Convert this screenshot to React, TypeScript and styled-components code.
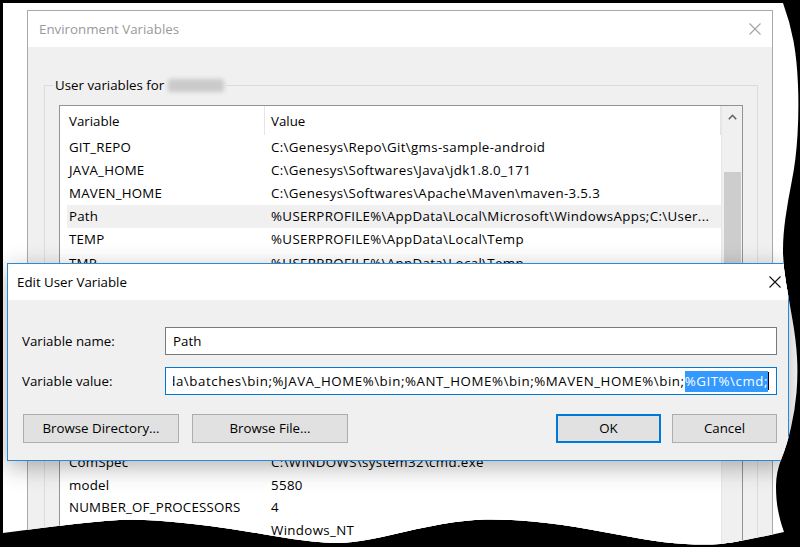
import React from "react";
import styled, { createGlobalStyle } from "styled-components";

type Pt = [number, number];

// torn paper outline: right edge then bottom edge, each smoothed on its own
const RIGHT_EDGE: Pt[] = [
  [783, 3], [790, 22], [797, 60], [799, 110], [796, 160], [788, 200], [783, 235],
  [783, 265], [789, 300], [796, 340], [798, 375], [795, 410], [787, 445], [776, 472],
  [776, 500], [780, 520], [784, 532],
];
const BOTTOM_EDGE: Pt[] = [
  [784, 532], [735, 543], [705, 545], [665, 543], [620, 535], [560, 524], [505, 519],
  [465, 520], [420, 528], [370, 540], [335, 544], [290, 539], [240, 530], [180, 522],
  [130, 519], [80, 523], [3, 533],
];

const smooth = (pts: Pt[]) => {
  let d = "";
  for (let i = 1; i < pts.length - 1; i++) {
    const [x, y] = pts[i];
    const [nx, ny] = pts[i + 1];
    d += ` Q${x} ${y} ${(x + nx) / 2} ${(y + ny) / 2}`;
  }
  const last = pts[pts.length - 1];
  return d + ` L${last[0]} ${last[1]}`;
};

const TORN_PATH = `M3 3 L783 3${smooth(RIGHT_EDGE)}${smooth(BOTTOM_EDGE)} L3 3 Z`;

const GlobalStyle = createGlobalStyle`
  html, body {
    margin: 0;
    padding: 0;
    background: #000;
  }
  body {
    font-family: "Open Sans", "Noto Sans", sans-serif;
    font-size: 13.3px;
    color: #000;
  }
  * {
    box-sizing: border-box;
  }
`;

const Paper = styled.div`
  position: relative;
  width: 800px;
  height: 547px;
  background: #fff;
  overflow: hidden;
  clip-path: path("${TORN_PATH}");
`;

const Window = styled.div<{ $active?: boolean }>`
  position: absolute;
  display: flex;
  flex-direction: column;
  background: #f0f0f0;
  border: 1px solid ${({ $active }) => ($active ? "#2a8ad9" : "#a9a9a9")};
`;

const EnvWindow = styled(Window)`
  left: 27px;
  top: 10px;
  width: 746px;
  height: 600px;
`;

const EditWindow = styled(Window)`
  left: 7px;
  top: 263px;
  width: 782px;
  height: 198px;
  box-shadow: 0 6px 22px rgba(0, 0, 0, 0.3);
`;

const TitleBar = styled.div<{ $inactive?: boolean; $padLeft: number; $closeRight: number }>`
  display: flex;
  align-items: center;
  justify-content: space-between;
  height: 36px;
  flex: none;
  padding: 0 ${({ $closeRight }) => $closeRight}px 0 ${({ $padLeft }) => $padLeft}px;
  background: #fff;
  color: ${({ $inactive }) => ($inactive ? "#9a9a9a" : "#000")};
  font-size: 13.3px;
`;

const CloseGlyph = styled.svg<{ $inactive?: boolean }>`
  width: 12px;
  height: 12px;
  stroke: ${({ $inactive }) => ($inactive ? "#a2a2a2" : "#111")};
  stroke-width: 1.1;
`;

const CloseIcon = ({ inactive }: { inactive?: boolean }) => (
  <CloseGlyph $inactive={inactive} viewBox="0 0 12 12">
    <path d="M0.5 0.5 L11.5 11.5 M11.5 0.5 L0.5 11.5" fill="none" />
  </CloseGlyph>
);

const EnvBody = styled.div`
  flex: 1;
  display: flex;
  flex-direction: column;
  padding: 29px 14px 0 16px;
`;

const GroupBox = styled.fieldset`
  margin: 0;
  min-width: 0;
  padding: 11px 14px 10px 14px;
  border: 1px solid #dcdcdc;
`;

const GroupLegend = styled.legend`
  display: flex;
  align-items: center;
  gap: 4px;
  margin-left: -6px;
  padding: 0 2px;
  line-height: 18px;
`;

const BlurredName = styled.span`
  display: inline-block;
  width: 56px;
  height: 13px;
  background: #cacaca;
  border-radius: 2px;
  filter: blur(2px);
`;

const ListView = styled.div<{ $height: number }>`
  display: flex;
  height: ${({ $height }) => $height}px;
  border: 1px solid #8f949c;
  background: #fff;
  overflow: hidden;
`;

const ListMain = styled.div`
  flex: 1;
  min-width: 0;
  display: flex;
  flex-direction: column;
`;

const ListHeader = styled.div`
  display: flex;
  height: 29px;
  flex: none;
`;

const HeaderCell = styled.div<{ $width?: number; $pad: number }>`
  display: flex;
  align-items: center;
  width: ${({ $width }) => ($width ? `${$width}px` : "auto")};
  flex: ${({ $width }) => ($width ? "none" : "1")};
  padding-left: ${({ $pad }) => $pad}px;
  border-right: 1px solid #e5e5e5;
`;

const Rows = styled.div`
  display: flex;
  flex-direction: column;
  padding-left: 7px;
`;

const Row = styled.div<{ $height: number; $selected?: boolean }>`
  display: flex;
  align-items: center;
  height: ${({ $height }) => $height}px;
  flex: none;
  white-space: nowrap;
  background: ${({ $selected }) => ($selected ? "#f0f0f0" : "transparent")};
`;

const Cell = styled.div<{ $width?: number; $spacing: number }>`
  width: ${({ $width }) => ($width ? `${$width}px` : "auto")};
  flex: ${({ $width }) => ($width ? "none" : "1")};
  padding-left: 2px;
  overflow: hidden;
  letter-spacing: ${({ $spacing }) => $spacing}px;
`;

const ScrollBar = styled.div`
  width: 21px;
  flex: none;
  display: flex;
  flex-direction: column;
  align-items: center;
  background: #f0f0f0;
  border-left: 1px solid #e6e6e6;
`;

const ScrollArrow = styled.div`
  height: 22px;
  flex: none;
  display: flex;
  align-items: center;
  justify-content: center;
  svg {
    width: 9px;
    height: 6px;
    stroke: #606060;
    stroke-width: 1.6;
    fill: none;
  }
`;

const ScrollThumb = styled.div<{ $offset: number; $size: number }>`
  width: 17px;
  margin-top: ${({ $offset }) => $offset}px;
  height: ${({ $size }) => $size}px;
  background: #cdcdcd;
`;

const ButtonRow = styled.div<{ $top: number }>`
  display: flex;
  align-items: center;
  gap: 11px;
  margin-top: ${({ $top }) => $top}px;
  height: 28px;
  flex: none;
`;

const BrowseGroup = styled.div`
  display: flex;
  gap: 13px;
  margin-left: 1px;
`;

const Spacer = styled.div`
  flex: 1;
`;

const Button = styled.button<{ $width: number; $primary?: boolean }>`
  width: ${({ $width }) => $width}px;
  height: 29px;
  padding: 0;
  font: inherit;
  color: #000;
  background: #e1e1e1;
  border: 1px solid ${({ $primary }) => ($primary ? "#0078d7" : "#adadad")};
  box-shadow: ${({ $primary }) => ($primary ? "inset 0 0 0 1px #0078d7" : "none")};
`;

const EditBody = styled.div`
  flex: 1;
  display: flex;
  flex-direction: column;
  padding: 27px 11px 0 14px;
`;

const FieldRow = styled.div`
  display: grid;
  grid-template-columns: 143px 1fr;
  align-items: center;
  height: 28px;
  & + & {
    margin-top: 12px;
  }
`;

const TextBox = styled.div<{ $focused?: boolean }>`
  display: flex;
  align-items: center;
  height: 28px;
  padding: 0 7px;
  background: #fff;
  border: 1px solid ${({ $focused }) => ($focused ? "#0078d7" : "#7a7a7a")};
  white-space: nowrap;
  overflow: hidden;
`;

const ScrolledText = styled.div`
  display: flex;
  justify-content: flex-end;
  align-items: center;
  width: 100%;
  overflow: hidden;
  letter-spacing: 0.55px;
`;

const Selection = styled.span`
  background: #3399ff;
  color: #fff;
  line-height: 21px;
`;

const Caret = styled.span`
  width: 1px;
  height: 18px;
  flex: none;
  background: #000;
`;

const ChevronUp = () => (
  <svg viewBox="0 0 9 6">
    <path d="M0.8 5.2 L4.5 1.3 L8.2 5.2" />
  </svg>
);

type EnvVar = { name: string; value: string };

const userVars: EnvVar[] = [
  { name: "GIT_REPO", value: "C:\\Genesys\\Repo\\Git\\gms-sample-android" },
  { name: "JAVA_HOME", value: "C:\\Genesys\\Softwares\\Java\\jdk1.8.0_171" },
  { name: "MAVEN_HOME", value: "C:\\Genesys\\Softwares\\Apache\\Maven\\maven-3.5.3" },
  { name: "Path", value: "%USERPROFILE%\\AppData\\Local\\Microsoft\\WindowsApps;C:\\User..." },
  { name: "TEMP", value: "%USERPROFILE%\\AppData\\Local\\Temp" },
  { name: "TMP", value: "%USERPROFILE%\\AppData\\Local\\Temp" },
];

const systemVars: EnvVar[] = [
  { name: "ANT_HOME", value: "C:\\Genesys\\Softwares\\Apache\\Ant" },
  { name: "asl.log", value: "Destination=file" },
  { name: "ComSpec", value: "C:\\WINDOWS\\system32\\cmd.exe" },
  { name: "model", value: "5580" },
  { name: "NUMBER_OF_PROCESSORS", value: "4" },
  { name: "OS", value: "Windows_NT" },
];

const VariableList = ({
  vars,
  height,
  rowHeight,
  selected,
  thumb,
}: {
  vars: EnvVar[];
  height: number;
  rowHeight: number;
  selected?: number;
  thumb?: { offset: number; size: number };
}) => (
  <ListView $height={height}>
    <ListMain>
      <ListHeader>
        <HeaderCell $width={205} $pad={9}>Variable</HeaderCell>
        <HeaderCell $pad={6}>Value</HeaderCell>
      </ListHeader>
      <Rows>
        {vars.map((v, i) => (
          <Row key={v.name} $height={rowHeight} $selected={i === selected}>
            <Cell $width={202} $spacing={0.2}>{v.name}</Cell>
            <Cell $spacing={0.35}>{v.value}</Cell>
          </Row>
        ))}
      </Rows>
    </ListMain>
    <ScrollBar>
      <ScrollArrow>
        <ChevronUp />
      </ScrollArrow>
      {thumb && <ScrollThumb $offset={thumb.offset} $size={thumb.size} />}
    </ScrollBar>
  </ListView>
);

export default function App() {
  return (
    <>
      <GlobalStyle />
      <Paper>
        <EnvWindow>
          <TitleBar $inactive $padLeft={11} $closeRight={11}>
            <span>Environment Variables</span>
            <CloseIcon inactive />
          </TitleBar>
          <EnvBody>
            <GroupBox>
              <GroupLegend>
                User variables for <BlurredName />
              </GroupLegend>
              <VariableList
                vars={userVars}
                height={195}
                rowHeight={23.2}
                selected={3}
                thumb={{ offset: 44, size: 150 }}
              />
            </GroupBox>
            <ButtonRow $top={8}>
              <Spacer />
              <Button $width={104}>New...</Button>
              <Button $width={104}>Edit...</Button>
              <Button $width={104}>Delete</Button>
            </ButtonRow>
            <GroupBox>
              <GroupLegend>System variables</GroupLegend>
              <VariableList vars={systemVars} height={220} rowHeight={22.5} />
            </GroupBox>
          </EnvBody>
        </EnvWindow>

        <EditWindow $active>
          <TitleBar $padLeft={9} $closeRight={7}>
            <span>Edit User Variable</span>
            <CloseIcon />
          </TitleBar>
          <EditBody>
            <FieldRow>
              <span>Variable name:</span>
              <TextBox>Path</TextBox>
            </FieldRow>
            <FieldRow>
              <span>Variable value:</span>
              <TextBox $focused>
                <ScrolledText>
                  <span>
                    C:\Tools\Anaconda\batches\bin;%JAVA_HOME%\bin;%ANT_HOME%\bin;%MAVEN_HOME%\bin;
                  </span>
                  <Selection>%GIT%\cmd;</Selection>
                  <Caret />
                </ScrolledText>
              </TextBox>
            </FieldRow>
            <ButtonRow $top={19}>
              <BrowseGroup>
                <Button $width={156}>Browse Directory...</Button>
                <Button $width={156}>Browse File...</Button>
              </BrowseGroup>
              <Spacer />
              <Button $width={105} $primary>OK</Button>
              <Button $width={105}>Cancel</Button>
            </ButtonRow>
          </EditBody>
        </EditWindow>
      </Paper>
    </>
  );
}
